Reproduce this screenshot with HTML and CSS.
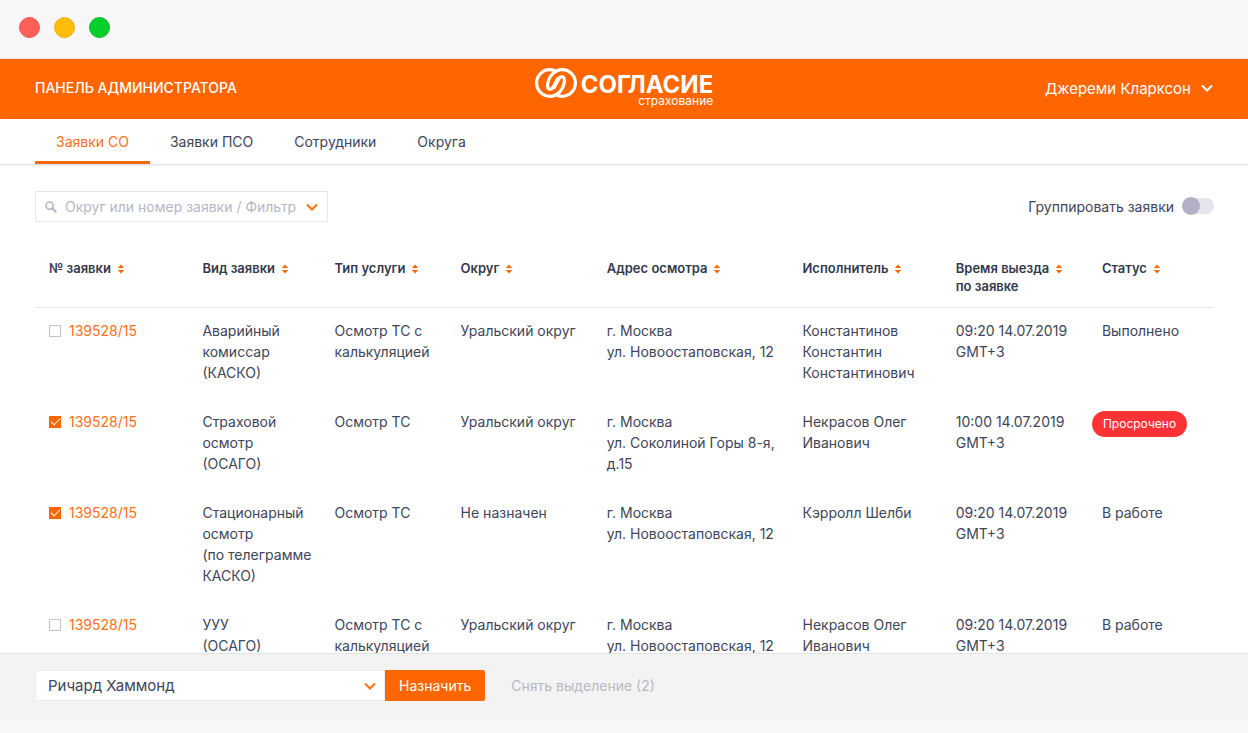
FILE: index.html
```html
<!DOCTYPE html>
<html lang="ru">
<head>
<meta charset="utf-8">
<title>Согласие — Панель администратора</title>
<link rel="stylesheet" href="styles.css">
</head>
<body>
<svg class="defs" aria-hidden="true">
  <symbol id="sort" viewBox="0 0 8 10"><path d="M4 0.5 7.2 4H0.8zM4 9.5 7.2 6H0.8z" fill="#ff6600"/></symbol>
  <symbol id="chevron" viewBox="0 0 12 8"><path d="M1 1.500 6 6.500l5-5" fill="none" stroke="currentColor" stroke-width="2"/></symbol>
</svg>
<div class="window-bar">
  <span class="dot dot-close"></span><span class="dot dot-min"></span><span class="dot dot-max"></span>
</div>
<header class="header">
  <h1 class="title">ПАНЕЛЬ АДМИНИСТРАТОРА</h1>
  <div class="brand">
    <svg class="brand-mark" viewBox="0 0 42 30" aria-hidden="true">
      <g fill="none" stroke="#fff" stroke-width="3.200" stroke-linecap="round" stroke-linejoin="round">
        <path d="M21 3.600C18.900 2.200 17 1.700 14.900 1.700A13.300 13.300 0 0 0 14.900 28.300C22.500 28.300 28.600 21.500 29.400 13.200C29.800 8.200 25.800 7.300 23.800 11L19.200 19.600"/>
        <path d="M21 26.400C23.100 27.800 25 28.300 27.100 28.300A13.300 13.300 0 0 0 27.100 1.700C19.500 1.700 13.400 8.500 12.600 16.800C12.200 21.800 16.200 22.700 18.200 19L22.800 10.400"/>
      </g>
    </svg>
    <div class="brand-text"><span class="brand-name">СОГЛАСИЕ</span><span class="brand-sub">страхование</span></div>
  </div>
  <button class="user" type="button">Джереми Кларксон <svg class="chevron"><use href="#chevron"/></svg></button>
</header>
<nav class="tabs">
  <a class="tab tab-active" href="#so">Заявки СО</a>
  <a class="tab" href="#pso">Заявки ПСО</a>
  <a class="tab" href="#staff">Сотрудники</a>
  <a class="tab" href="#districts">Округа</a>
</nav>
<main class="main">
  <div class="toolbar">
    <div class="search">
      <svg class="search-icon" viewBox="0 0 12 12" aria-hidden="true"><g fill="none" stroke="#b4b3c6" stroke-width="1.600"><circle cx="4.600" cy="4.600" r="3.600"/><path d="M7.200 7.200 11.300 11.300" stroke-width="2"/></g></svg>
      <input class="search-input" type="text" aria-label="Поиск заявок" placeholder="Округ или номер заявки / Фильтр">
      <button class="search-toggle" type="button" aria-label="Фильтр"><svg class="chevron"><use href="#chevron"/></svg></button>
    </div>
    <label class="group">Группировать заявки <input class="switch" type="checkbox" role="switch"></label>
  </div>
  <table class="table">
    <colgroup><col class="c-num"><col class="c-kind"><col class="c-type"><col class="c-area"><col class="c-addr"><col class="c-person"><col class="c-time"><col class="c-status"></colgroup>
    <thead>
      <tr>
        <th scope="col">№ заявки<svg class="sort"><use href="#sort"/></svg></th>
        <th scope="col">Вид заявки<svg class="sort"><use href="#sort"/></svg></th>
        <th scope="col">Тип услуги<svg class="sort"><use href="#sort"/></svg></th>
        <th scope="col">Округ<svg class="sort"><use href="#sort"/></svg></th>
        <th scope="col">Адрес осмотра<svg class="sort"><use href="#sort"/></svg></th>
        <th scope="col">Исполнитель<svg class="sort"><use href="#sort"/></svg></th>
        <th scope="col">Время выезда<svg class="sort"><use href="#sort"/></svg><br>по заявке</th>
        <th scope="col">Статус<svg class="sort"><use href="#sort"/></svg></th>
      </tr>
    </thead>
    <tbody>
      <tr>
        <td><div class="num"><input class="check" type="checkbox" aria-label="Выбрать заявку 1"><a class="link" href="#r1">139528/15</a></div></td>
        <td>Аварийный<br>комиссар<br>(КАСКО)</td>
        <td>Осмотр ТС с<br>калькуляцией</td>
        <td>Уральский округ</td>
        <td>г. Москва<br>ул. Новоостаповская, 12</td>
        <td>Константинов<br>Константин<br>Константинович</td>
        <td>09:20 14.07.2019<br>GMT+3</td>
        <td>Выполнено</td>
      </tr>
      <tr>
        <td><div class="num"><input class="check" type="checkbox" checked aria-label="Выбрать заявку 2"><a class="link" href="#r2">139528/15</a></div></td>
        <td>Страховой<br>осмотр<br>(ОСАГО)</td>
        <td>Осмотр ТС</td>
        <td>Уральский округ</td>
        <td>г. Москва<br>ул. Соколиной Горы 8-я,<br>д.15</td>
        <td>Некрасов Олег<br>Иванович</td>
        <td>10:00 14.07.2019<br>GMT+3</td>
        <td><span class="badge">Просрочено</span></td>
      </tr>
      <tr>
        <td><div class="num"><input class="check" type="checkbox" checked aria-label="Выбрать заявку 3"><a class="link" href="#r3">139528/15</a></div></td>
        <td>Стационарный<br>осмотр<br>(по телеграмме<br>КАСКО)</td>
        <td>Осмотр ТС</td>
        <td>Не назначен</td>
        <td>г. Москва<br>ул. Новоостаповская, 12</td>
        <td>Кэрролл Шелби</td>
        <td>09:20 14.07.2019<br>GMT+3</td>
        <td>В работе</td>
      </tr>
      <tr>
        <td><div class="num"><input class="check" type="checkbox" aria-label="Выбрать заявку 4"><a class="link" href="#r4">139528/15</a></div></td>
        <td>УУУ<br>(ОСАГО)</td>
        <td>Осмотр ТС с<br>калькуляцией</td>
        <td>Уральский округ</td>
        <td>г. Москва<br>ул. Новоостаповская, 12</td>
        <td>Некрасов Олег<br>Иванович</td>
        <td>09:20 14.07.2019<br>GMT+3</td>
        <td>В работе</td>
      </tr>
    </tbody>
  </table>
</main>
<footer class="actions">
  <div class="picker">
    <select class="picker-select" aria-label="Исполнитель"><option>Ричард Хаммонд</option></select>
    <svg class="chevron picker-chevron"><use href="#chevron"/></svg>
  </div>
  <button class="assign" type="button">Назначить</button>
  <button class="clear" type="button">Снять выделение (2)</button>
</footer>
</body>
</html>
```
FILE: styles.css
```css
* { box-sizing: border-box; }

body {
  margin: 0;
  height: 100vh;
  padding-bottom: 13px;
  display: flex;
  flex-direction: column;
  overflow: hidden;
  background: #f8f8f8;
  color: #404559;
  font: 14px/21px Inter, "Liberation Sans", sans-serif;
}

button, input, select { font: inherit; color: inherit; }
button { border: 0; padding: 0; background: none; cursor: pointer; }
a { color: inherit; text-decoration: none; }

.defs { display: none; }
.chevron { width: 12px; height: 8px; flex: none; }

.window-bar {
  flex: none;
  display: flex;
  align-items: center;
  gap: 14px;
  height: 59px;
  padding: 0 19px 4px;
  background: #f7f7f7;
  border-bottom: 1px solid #e6e2e2;
}
.dot { width: 21px; height: 21px; border-radius: 50%; border: 1px solid; }
.dot-close { background: #ff6159; border-color: #e8574f; }
.dot-min { background: #ffbd0a; border-color: #eeae12; }
.dot-max { background: #04cf2b; border-color: #0db52a; }

.header {
  flex: none;
  display: grid;
  grid-template-columns: 1fr auto 1fr;
  align-items: center;
  height: 60px;
  padding: 0 35px 2px;
  background: #ff6600;
  color: #fff;
}
.title { margin: 0; font-size: 14px; font-weight: 500; line-height: 20px; }
.brand { display: flex; align-items: flex-start; gap: 4px; height: 40px; }
.brand-mark { width: 42px; height: 30px; }
.brand-text { display: flex; flex-direction: column; align-items: flex-end; padding-top: 6px; }
.brand-name { font-size: 24px; line-height: 22px; font-weight: 700; }
.brand-sub { font-size: 12px; line-height: 10px; }
.user { display: flex; align-items: center; gap: 10px; justify-self: end; font-size: 15px; }

.tabs {
  flex: none;
  display: flex;
  height: 46px;
  padding: 0 35px;
  background: #fff;
  border-bottom: 1px solid #e4e4e8;
  box-shadow: 0 1px 2px #00000012;
  z-index: 1;
}
.tab { display: flex; align-items: center; padding: 3px 21px 0 20px; border-bottom: 3px solid transparent; }
.tab-active { padding-left: 21px; color: #ff6f1c; border-color: #f26a12; }

.main { flex: 1; min-height: 0; overflow: hidden; padding: 26px 34px 0 35px; background: #fff; }

.toolbar { display: flex; justify-content: space-between; align-items: flex-start; margin-bottom: 37px; }
.search {
  display: flex;
  align-items: center;
  width: 293px;
  height: 31px;
  padding: 0 9px;
  border: 1px solid #e6e6ee;
}
.search-icon { width: 12px; height: 12px; flex: none; }
.search-input { flex: 1; min-width: 0; border: 0; padding: 0 0 0 8px; outline: 0; background: none; }
.search-input::placeholder { color: #b7b6c6; opacity: 1; }
.search-toggle { display: flex; color: #ff6f14; }

.group { display: flex; align-items: center; gap: 8px; height: 30px; }
.switch {
  appearance: none;
  display: flex;
  width: 32px;
  height: 16px;
  margin: 0;
  border-radius: 8px;
  background: #e5e4ec;
}
.switch::before { content: ""; width: 18px; height: 18px; margin-top: -1px; border-radius: 50%; background: #b3b0c6; }

.table { width: 100%; table-layout: fixed; border-collapse: collapse; }
.c-num { width: 14.2%; }
.c-kind { width: 11.2%; }
.c-type { width: 10.7%; }
.c-area { width: 12.4%; }
.c-addr { width: 16.6%; }
.c-person { width: 13%; }
.c-time { width: 12.4%; }
.c-status { width: 9.5%; }
.table th {
  padding: 0 0 12px;
  border-bottom: 1px solid #e6e6ea;
  color: #33384d;
  font-size: 13px;
  font-weight: 600;
  line-height: 18px;
  text-align: left;
  vertical-align: top;
  white-space: nowrap;
}
.table td { padding: 12px 0 16px; vertical-align: top; white-space: nowrap; }
.table th:first-child, .table td:first-child { padding-left: 14px; }
.sort { width: 8px; height: 10px; margin-left: 6px; vertical-align: -1px; }

.num { display: flex; align-items: center; gap: 8px; }
.check {
  appearance: none;
  display: flex;
  align-items: center;
  justify-content: center;
  width: 12px;
  height: 12px;
  margin: 0;
  border: 1px solid #c3c2d1;
}
.check:checked { background: #ff6600; border-color: #ff6600; }
.check:checked::before {
  content: "";
  width: 8px;
  height: 4px;
  margin-bottom: 2px;
  border: solid #fff;
  border-width: 0 0 1px 1px;
  transform: rotate(-45deg);
}
.link { color: #ff6f1c; }
.badge {
  display: inline-block;
  margin: 0 0 0 -10px;
  padding: 0 11px;
  border-radius: 13px;
  background: #ff3335;
  color: #fff;
  font-size: 12px;
  line-height: 26px;
}

.actions {
  flex: none;
  display: flex;
  align-items: center;
  height: 67px;
  padding: 0 35px 3px;
  background: #f3f3f3;
  border-top: 1px solid #e4e4e6;
}
.picker { display: grid; align-items: center; width: 350px; height: 31px; background: #fff; border: 1px solid #ececf2; }
.picker > * { grid-area: 1 / 1; }
.picker-select { appearance: none; width: 100%; height: 100%; padding: 0 12px; border: 0; background: none; font-size: 15px; }
.picker-chevron { justify-self: end; margin-right: 8px; color: #ff6f14; pointer-events: none; }
.assign { height: 31px; padding: 0 14px; border-radius: 0 2px 2px 0; background: #ff6600; color: #fff; }
.clear { margin-left: 26px; color: #b9b8c3; }
```
